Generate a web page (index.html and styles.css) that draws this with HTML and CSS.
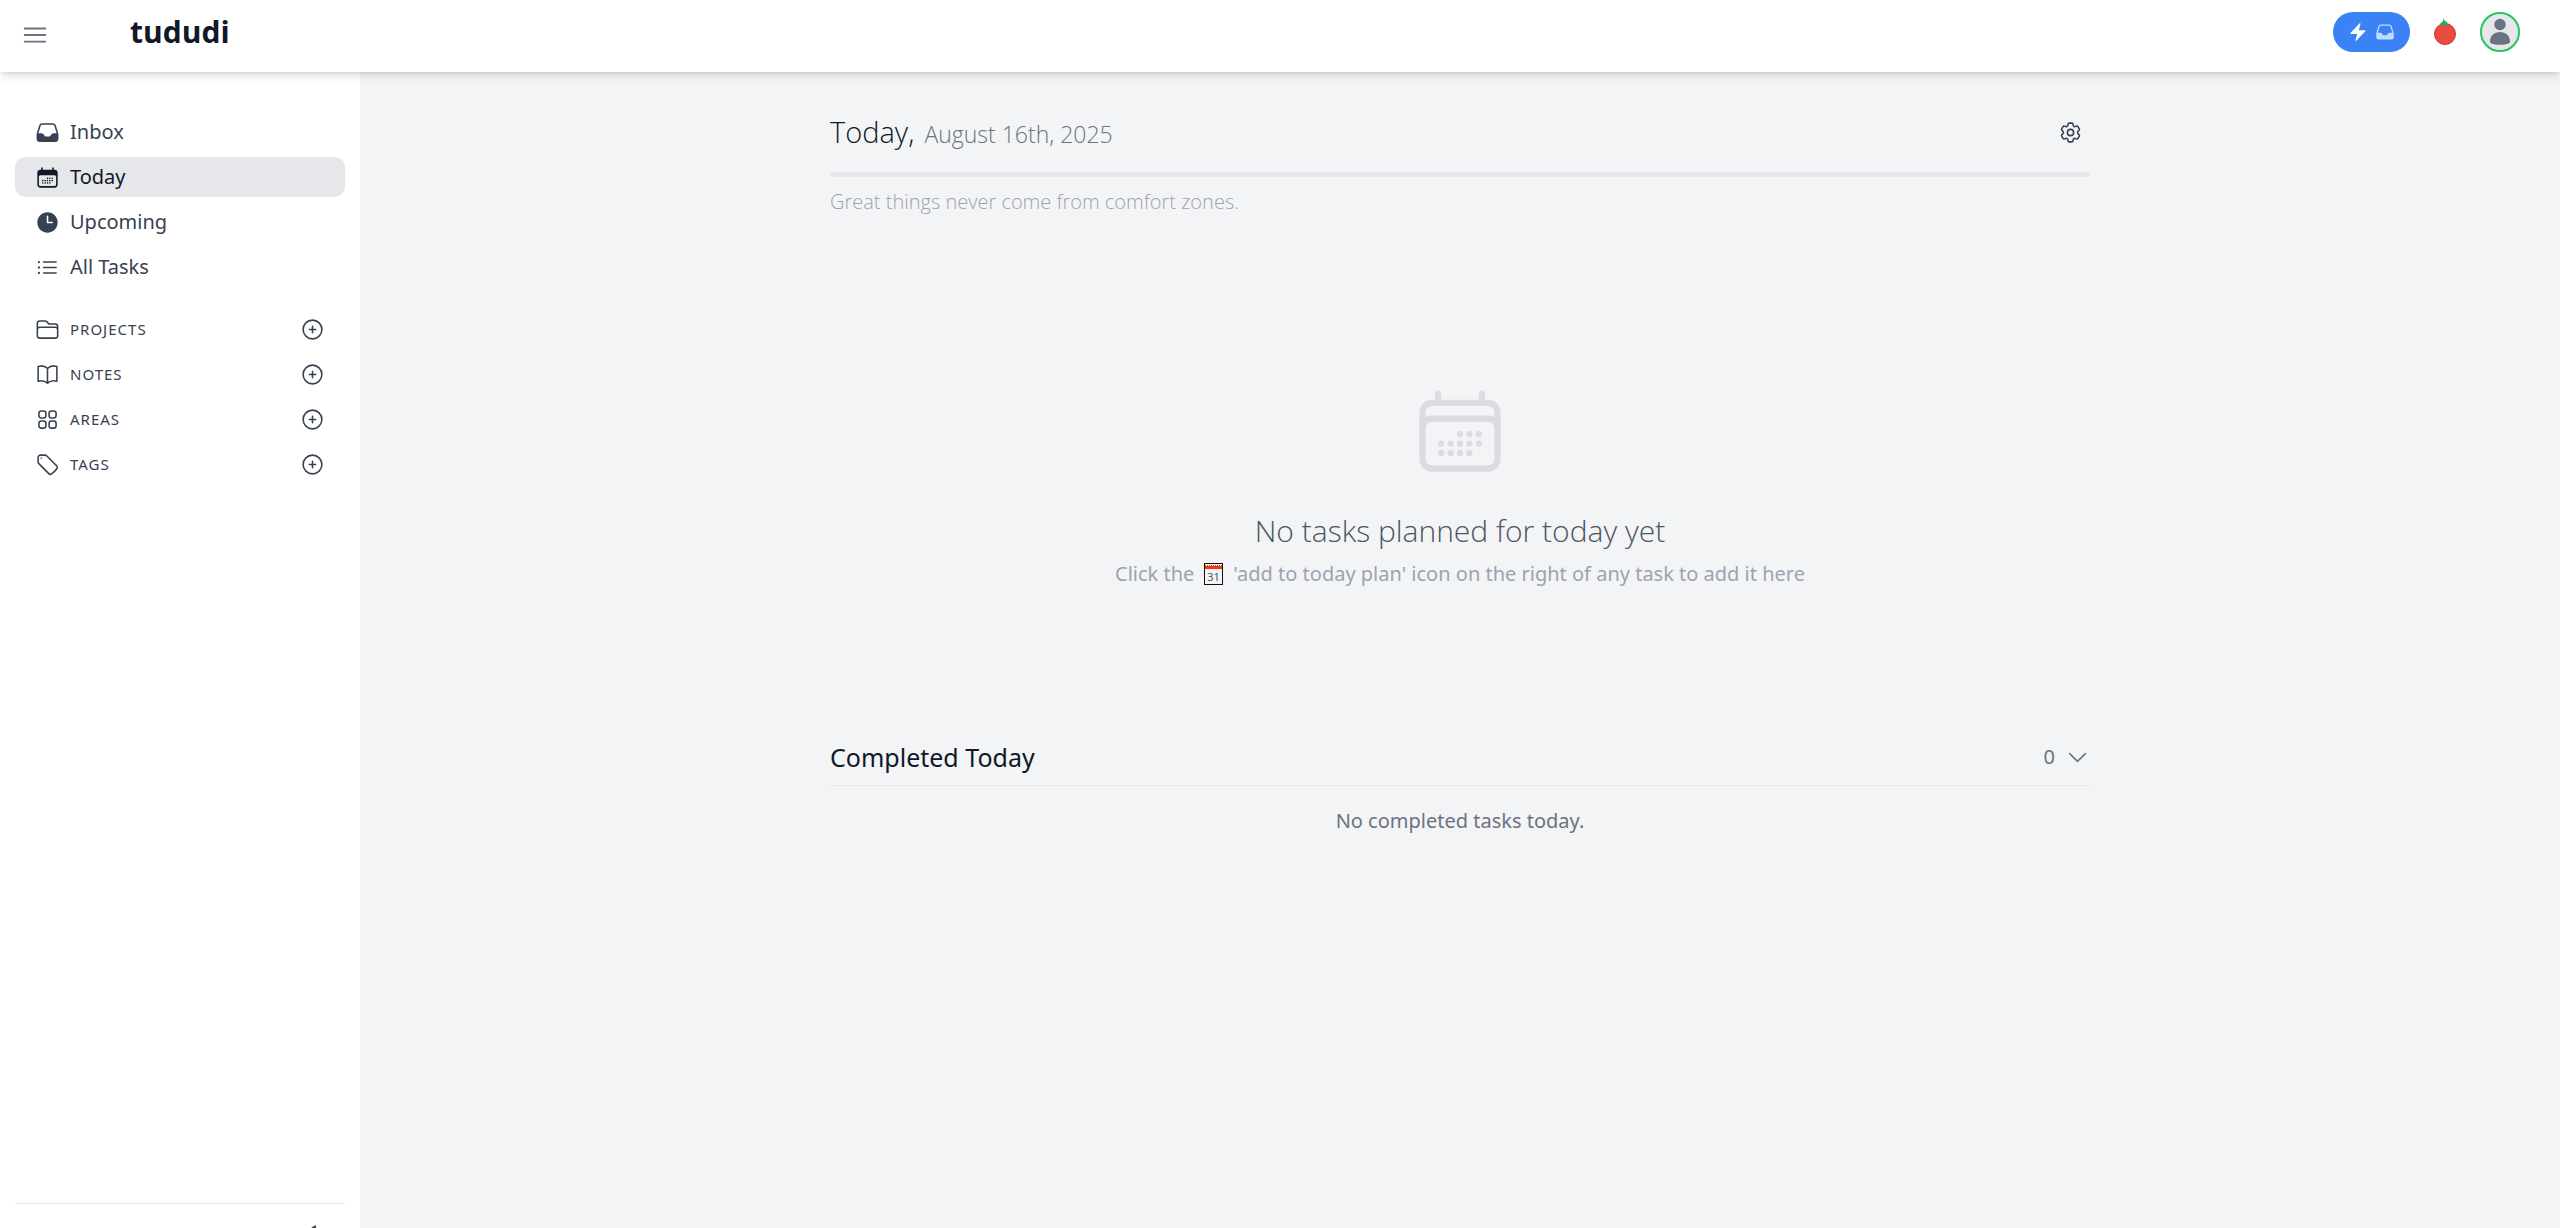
FILE: index.html
```html
<!DOCTYPE html>
<html lang="en">
<head>
    <meta charset="UTF-8">
    <meta name="viewport" content="width=device-width, initial-scale=1.0">
    <title>tududi</title>
    <link rel="stylesheet" href="styles.css">
</head>
<body>
    <svg class="sprite" aria-hidden="true">
        <symbol id="icon-plus" viewBox="0 0 24 24">
            <path d="M12 9v6m3-3H9m12 0a9 9 0 11-18 0 9 9 0 0118 0z"/>
        </symbol>
        <symbol id="icon-inbox" viewBox="0 0 24 24">
            <path fill-rule="evenodd" d="M6.912 3a3 3 0 00-2.868 2.118l-2.411 7.838a3 3 0 00-.133.882V18a3 3 0 003 3h15a3 3 0 003-3v-4.162c0-.299-.045-.596-.133-.882l-2.412-7.838A3 3 0 0017.088 3H6.912zm13.823 9.75l-2.213-7.191A1.5 1.5 0 0017.088 4.5H6.912a1.5 1.5 0 00-1.434 1.059L3.265 12.75H6.11a3 3 0 012.684 1.658l.256.513a1.5 1.5 0 001.342.829h3.218a1.5 1.5 0 001.342-.83l.256-.512a3 3 0 012.684-1.658h2.844z"/>
        </symbol>
    </svg>

    <header class="navbar">
        <div class="navbar-left">
            <button class="icon-button menu-button" aria-label="Toggle sidebar">
                <svg class="icon icon-menu" viewBox="0 0 24 24"><path d="M3.75 6.75h16.5M3.75 12h16.5m-16.5 5.25h16.5"/></svg>
            </button>
            <a class="brand" href="#">tududi</a>
        </div>
        <div class="navbar-right">
            <button class="quick-add" aria-label="Quick add to inbox">
                <svg class="icon-small" viewBox="0 0 24 24"><path d="M14.615 1.595a.75.75 0 01.359.852L12.982 9.75h7.268a.75.75 0 01.548 1.262l-10.5 11.25a.75.75 0 01-1.272-.71l1.992-7.302H3.75a.75.75 0 01-.548-1.262l10.5-11.25a.75.75 0 01.913-.143z"/></svg>
                <svg class="icon-small quick-inbox"><use href="#icon-inbox"/></svg>
            </button>
            <button class="icon-button" aria-label="Pomodoro timer">
                <svg class="tomato" viewBox="0 0 24 28">
                    <circle cx="12" cy="16" r="10.5" fill="#e74c3c" stroke="#c0392b"/>
                    <path fill="#27ae60" d="M10.500 0.500l1.300 2.500 2.700 1-.5 1 1 2-1 .8-2-.8-1.500 1-1.500-1-2 .5.500-2.500 2-1z"/>
                </svg>
            </button>
            <button class="avatar" aria-label="Account">
                <svg viewBox="0 0 36 36">
                    <circle cx="18" cy="10.500" r="5.700"/>
                    <path d="M8 27.500C8 21.500 12.500 18 18 18s10 3.500 10 9.500c0 2-3 3.200-10 3.200S8 29.500 8 27.500z"/>
                </svg>
            </button>
        </div>
    </header>

    <div class="layout">
        <aside class="sidebar">
            <nav class="menu">
                <a class="menu-link" href="#">
                    <svg class="icon-solid"><use href="#icon-inbox"/></svg>
                    Inbox
                </a>
                <a class="menu-link active" href="#">
                    <svg class="icon-solid" viewBox="0 0 24 24">
                        <path fill-rule="evenodd" d="M6.75 2.250A.75.75 0 017.500 3v1.500h9V3A.75.75 0 0118 3v1.500h.75a3 3 0 013 3v11.250a3 3 0 01-3 3H5.250a3 3 0 01-3-3V7.500a3 3 0 013-3H6V3a.75.75 0 01.75-.75zm13.500 9a1.500 1.500 0 00-1.500-1.500H5.250a1.500 1.500 0 00-1.500 1.500v7.500a1.500 1.500 0 001.500 1.500h13.500a1.500 1.500 0 001.500-1.500v-7.500z"/>
                        <g>
                            <circle cx="12" cy="12.750" r=".75"/><circle cx="14.250" cy="12.750" r=".75"/><circle cx="16.500" cy="12.750" r=".75"/>
                            <circle cx="7.500" cy="15" r=".75"/><circle cx="9.750" cy="15" r=".75"/><circle cx="12" cy="15" r=".75"/><circle cx="14.250" cy="15" r=".75"/><circle cx="16.500" cy="15" r=".75"/>
                            <circle cx="7.500" cy="17.250" r=".75"/><circle cx="9.750" cy="17.250" r=".75"/><circle cx="12" cy="17.250" r=".75"/><circle cx="14.250" cy="17.250" r=".75"/>
                        </g>
                    </svg>
                    Today
                </a>
                <a class="menu-link" href="#">
                    <svg class="icon-solid" viewBox="0 0 24 24"><path fill-rule="evenodd" d="M12 2.250c-5.385 0-9.750 4.365-9.750 9.750s4.365 9.750 9.750 9.750 9.750-4.365 9.750-9.750S17.385 2.250 12 2.250zM12.750 6a.75.75 0 00-1.500 0v6c0 .414.336.75.75.75h4.500a.75.75 0 000-1.500h-3.750V6z"/></svg>
                    Upcoming
                </a>
                <a class="menu-link" href="#">
                    <svg class="icon" viewBox="0 0 24 24">
                        <path d="M8.250 6.750h12M8.250 12h12m-12 5.250h12"/>
                        <path d="M3.750 6.750h.01M3.750 12h.01M3.750 17.250h.01" stroke-width="2.200"/>
                    </svg>
                    All Tasks
                </a>
            </nav>

            <ul class="sections">
                <li class="section">
                    <a class="section-link" href="#">
                        <svg class="icon" viewBox="0 0 24 24"><path d="M2.250 12.750V12A2.250 2.250 0 014.500 9.750h15A2.250 2.250 0 0121.750 12v.75m-8.690-6.440l-2.120-2.120a1.500 1.500 0 00-1.061-.44H4.500A2.250 2.250 0 002.250 6v12a2.250 2.250 0 002.250 2.250h15A2.250 2.250 0 0021.750 18V9a2.250 2.250 0 00-2.250-2.250h-5.379a1.500 1.500 0 01-1.060-.44z"/></svg>
                        PROJECTS
                    </a>
                    <button class="icon-button" aria-label="Add project"><svg class="icon"><use href="#icon-plus"/></svg></button>
                </li>
                <li class="section">
                    <a class="section-link" href="#">
                        <svg class="icon" viewBox="0 0 24 24"><path d="M12 6.042A8.967 8.967 0 006 3.750c-1.052 0-2.062.18-3 .512v14.250A8.987 8.987 0 016 18c2.305 0 4.408.867 6 2.292m0-14.250a8.966 8.966 0 016-2.292c1.052 0 2.062.18 3 .512v14.250A8.987 8.987 0 0018 18a8.967 8.967 0 00-6 2.292m0-14.250v14.250"/></svg>
                        NOTES
                    </a>
                    <button class="icon-button" aria-label="Add note"><svg class="icon"><use href="#icon-plus"/></svg></button>
                </li>
                <li class="section">
                    <a class="section-link" href="#">
                        <svg class="icon" viewBox="0 0 24 24">
                            <rect x="3.750" y="3.750" width="6.750" height="6.750" rx="2.250"/>
                            <rect x="13.500" y="3.750" width="6.750" height="6.750" rx="2.250"/>
                            <rect x="3.750" y="13.500" width="6.750" height="6.750" rx="2.250"/>
                            <rect x="13.500" y="13.500" width="6.750" height="6.750" rx="2.250"/>
                        </svg>
                        AREAS
                    </a>
                    <button class="icon-button" aria-label="Add area"><svg class="icon"><use href="#icon-plus"/></svg></button>
                </li>
                <li class="section">
                    <a class="section-link" href="#">
                        <svg class="icon" viewBox="0 0 24 24"><path d="M9.568 3H5.250A2.250 2.250 0 003 5.250v4.318c0 .597.237 1.170.659 1.591l9.581 9.581c.699.699 1.780.872 2.607.33a18.095 18.095 0 005.223-5.223c.542-.827.369-1.908-.33-2.607L11.160 3.660A2.250 2.250 0 009.568 3z"/><path d="M6 6h.008v.008H6V6z"/></svg>
                        TAGS
                    </a>
                    <button class="icon-button" aria-label="Add tag"><svg class="icon"><use href="#icon-plus"/></svg></button>
                </li>
            </ul>

            <div class="sidebar-footer">
                <button class="icon-button" aria-label="Toggle dark mode">
                    <svg class="icon" viewBox="0 0 24 24"><path d="M21.752 15.002A9.718 9.718 0 0118 15.750c-5.385 0-9.750-4.365-9.750-9.750 0-1.330.266-2.597.748-3.752A9.753 9.753 0 003 11.250C3 16.635 7.365 21 12.750 21a9.753 9.753 0 009.002-5.998z"/></svg>
                </button>
            </div>
        </aside>

        <main class="main">
            <div class="content">
                <div class="page-header">
                    <h1 class="page-title">Today,</h1>
                    <span class="page-date">August 16th, 2025</span>
                    <button class="icon-button settings-button" aria-label="Settings">
                        <svg class="icon" viewBox="0 0 24 24">
                            <path d="M9.594 3.940c.09-.542.56-.94 1.110-.94h2.593c.55 0 1.020.398 1.110.94l.213 1.281c.063.374.313.686.645.87.074.04.147.083.22.127.324.196.72.257 1.075.124l1.217-.456a1.125 1.125 0 011.370.49l1.296 2.247a1.125 1.125 0 01-.26 1.431l-1.003.827c-.293.24-.438.613-.431.992a6.759 6.759 0 010 .255c-.007.378.138.75.43.99l1.005.828c.424.35.534.954.26 1.430l-1.298 2.247a1.125 1.125 0 01-1.369.491l-1.217-.456c-.355-.133-.75-.072-1.076.124a6.570 6.570 0 01-.22.128c-.331.183-.581.495-.644.869l-.213 1.280c-.09.543-.56.941-1.110.941h-2.594c-.55 0-1.020-.398-1.110-.94l-.213-1.281c-.062-.374-.312-.686-.644-.87a6.520 6.520 0 01-.22-.127c-.325-.196-.72-.257-1.076-.124l-1.217.456a1.125 1.125 0 01-1.369-.49l-1.297-2.247a1.125 1.125 0 01.26-1.431l1.004-.827c.292-.24.437-.613.43-.992a6.932 6.932 0 010-.255c.007-.378-.138-.75-.43-.99l-1.004-.828a1.125 1.125 0 01-.26-1.430l1.297-2.247a1.125 1.125 0 011.370-.491l1.216.456c.356.133.751.072 1.076-.124.072-.044.146-.087.22-.128.332-.183.582-.495.644-.869l.214-1.281z"/>
                            <circle cx="12" cy="12" r="3"/>
                        </svg>
                    </button>
                </div>
                <div class="progress"></div>
                <p class="quote">Great things never come from comfort zones.</p>

                <section class="empty">
                    <svg class="empty-icon" viewBox="0 0 24 24">
                        <path d="M6.750 3v2.250M17.250 3v2.250M3 18.750V7.500a2.250 2.250 0 012.250-2.250h13.500A2.250 2.250 0 0121 7.500v11.250m-18 0A2.250 2.250 0 005.250 21h13.500A2.250 2.250 0 0021 18.750m-18 0v-7.500A2.250 2.250 0 015.250 9h13.500A2.250 2.250 0 0121 11.250v7.500"/>
                        <path d="M12 12.750h.01M14.250 12.750h.01M16.500 12.750h.01M7.500 15h.01M9.750 15h.01M12 15h.01M14.250 15h.01M16.500 15h.01M7.500 17.250h.01M9.750 17.250h.01M12 17.250h.01M14.250 17.250h.01"/>
                    </svg>
                    <h2 class="empty-title">No tasks planned for today yet</h2>
                    <p class="empty-text">
                        Click the
                        <svg class="calendar-emoji" viewBox="0 0 19 22">
                            <rect x=".5" y=".5" width="18" height="21" fill="#f3f4f6" stroke="#111" />
                            <path fill="#f03a17" d="M1 2h17v4H1z"/>
                            <path stroke="#fff" stroke-dasharray="1 1" d="M2 2.500h15"/>
                            <text x="9.500" y="18" text-anchor="middle">31</text>
                        </svg>
                        'add to today plan' icon on the right of any task to add it here
                    </p>
                </section>

                <section class="completed">
                    <div class="completed-header">
                        <h3 class="completed-title">Completed Today</h3>
                        <button class="icon-button completed-toggle">
                            0
                            <svg class="icon" viewBox="0 0 24 24"><path d="M19.500 8.250l-7.500 7.500-7.500-7.500"/></svg>
                        </button>
                    </div>
                    <p class="completed-text">No completed tasks today.</p>
                </section>
            </div>
        </main>
    </div>
</body>
</html>
```
FILE: styles.css
```css
* {
    box-sizing: border-box;
}

body {
    display: flex;
    flex-direction: column;
    margin: 0;
    height: 100vh;
    overflow: hidden;
    background-color: #f3f4f6;
    color: #374151;
    font-family: "Noto Sans", "Open Sans", sans-serif;
    font-size: 20px;
    line-height: 30px;
}

h1, h2, h3, p, ul {
    margin: 0;
    padding: 0;
}

a {
    color: inherit;
    text-decoration: none;
}

button {
    font: inherit;
    color: inherit;
    border: none;
    cursor: pointer;
}

.sprite {
    display: none;
}

/* Icons */
.icon, .icon-solid {
    width: 25px;
    height: 25px;
    flex-shrink: 0;
}

.icon {
    fill: none;
    stroke: currentColor;
    stroke-width: 1.5;
    stroke-linecap: round;
    stroke-linejoin: round;
}

.icon-solid, .icon-small {
    fill: currentColor;
}

.icon-small {
    width: 20px;
    height: 20px;
}

.icon-button {
    display: flex;
    align-items: center;
    padding: 0;
    background: none;
}

/* Navbar */
.navbar {
    position: relative;
    z-index: 1;
    display: flex;
    flex-shrink: 0;
    justify-content: space-between;
    height: 72px;
    padding: 12px 40px 20px 20px;
    background-color: #fff;
    box-shadow: 0 5px 8px -1px rgba(0, 0, 0, 0.12), 0 2px 5px -2px rgba(0, 0, 0, 0.12);
}

.navbar-left, .navbar-right {
    display: flex;
    align-items: center;
}

.navbar-left {
    gap: 80px;
}

.menu-button {
    padding-top: 5px;
}

.icon-menu {
    width: 30px;
    height: 30px;
    color: #6b7280;
}

.brand {
    color: #111827;
    font-family: "Open Sans", sans-serif;
    font-size: 30px;
    font-weight: 700;
}

.navbar-right {
    gap: 23px;
}

.quick-add {
    display: flex;
    align-items: center;
    gap: 7px;
    height: 40px;
    padding: 0 15px;
    border-radius: 20px;
    background-color: #3b82f6;
    color: #fff;
}

.quick-inbox {
    color: #bfdbfe;
}

.tomato {
    width: 24px;
    height: 28px;
}

.avatar {
    width: 40px;
    height: 40px;
    padding: 0;
    border: 2px solid #22c55e;
    border-radius: 50%;
    background-color: #e5e7eb;
    fill: #6b7280;
}

.avatar svg {
    display: block;
}

/* Sidebar */
.layout {
    display: flex;
    flex: 1;
    min-height: 0;
    overflow: hidden;
}

.sidebar {
    display: flex;
    flex-direction: column;
    width: 360px;
    height: 100vh;
    flex-shrink: 0;
    padding: 40px 15px 0;
    background-color: #fff;
}

.menu {
    display: flex;
    flex-direction: column;
    gap: 5px;
}

.menu-link {
    display: flex;
    align-items: center;
    gap: 10px;
    height: 40px;
    padding: 0 20px;
    border-radius: 10px;
}

.menu-link.active {
    background-color: #e5e7eb;
    color: #111827;
}

.sections {
    display: flex;
    flex-direction: column;
    gap: 5px;
    margin-top: 22px;
    list-style: none;
}

.section {
    display: flex;
    align-items: center;
    justify-content: space-between;
    height: 40px;
    padding: 0 20px;
}

.section-link {
    display: flex;
    align-items: center;
    gap: 10px;
    font-size: 15px;
    letter-spacing: 1px;
}

.sidebar-footer {
    display: flex;
    justify-content: flex-end;
    height: 97px;
    margin-top: auto;
    padding: 20px 14px;
    border-top: 1px solid #e5e7eb;
    align-items: flex-start;
}

/* Main */
.main {
    flex: 1;
    padding: 40px 20px;
}

.content {
    max-width: 1260px;
    margin: 0 auto;
}

.page-header {
    display: flex;
    align-items: baseline;
    gap: 10px;
    height: 40px;
    margin-bottom: 20px;
}

.page-title, .page-date, .quote, .empty-title {
    font-family: "Open Sans", sans-serif;
    font-weight: 300;
}

.page-title {
    color: #111827;
    font-size: 29px;
    line-height: 40px;
}

.page-date {
    color: #6b7280;
    font-size: 23px;
}

.settings-button {
    align-self: center;
    margin-left: auto;
    padding: 7px;
}

.progress {
    height: 5px;
    border-radius: 3px;
    background-color: #e5e7eb;
}

.quote {
    margin-top: 10px;
    color: #9ca3af;
}

.empty {
    display: flex;
    flex-direction: column;
    align-items: center;
    margin-top: 164px;
    text-align: center;
}

.empty-icon {
    width: 100px;
    height: 100px;
    fill: none;
    stroke: #dadce2;
    stroke-width: 1.5;
    stroke-linecap: round;
}

.empty-title {
    margin-top: 30px;
    color: #4b5563;
    font-size: 30px;
    line-height: 40px;
}

.empty-text {
    display: flex;
    align-items: center;
    gap: 10px;
    margin-top: 8px;
    color: #9ca3af;
}

.calendar-emoji {
    width: 19px;
    height: 22px;
}

.calendar-emoji text {
    font-size: 11px;
    fill: #4b5563;
}

.completed {
    margin-top: 150px;
}

.completed-header {
    display: flex;
    align-items: center;
    justify-content: space-between;
    padding-bottom: 10px;
    border-bottom: 1px solid #e5e7eb;
}

.completed-title {
    color: #111827;
    font-size: 25px;
    font-weight: 400;
    line-height: 36px;
}

.completed-toggle {
    gap: 10px;
    color: #6b7280;
}

.completed-text {
    margin-top: 20px;
    color: #6b7280;
    text-align: center;
}
```
